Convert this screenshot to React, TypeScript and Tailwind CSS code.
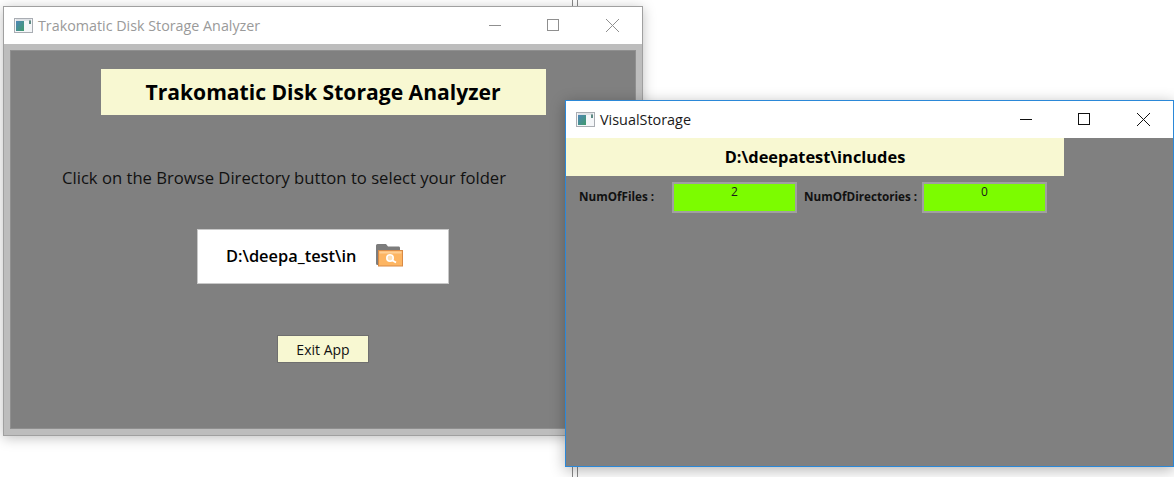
const uiFont = "font-['Open_Sans','Noto_Sans',sans-serif]";

const AppIcon = () => (
  <svg width="19" height="15" viewBox="0 0 19 15" className="shrink-0">
    <defs>
      <linearGradient id="appGrad" x1="0" y1="0" x2="1" y2="1">
        <stop offset="0" stopColor="#4f86b8" />
        <stop offset="1" stopColor="#3f9a6c" />
      </linearGradient>
    </defs>
    <rect x="0.5" y="0.5" width="18" height="14" fill="#f4f6f8" stroke="#a9adb3" />
    <rect x="2" y="3" width="8" height="10" fill="url(#appGrad)" />
    <rect x="15" y="2" width="2" height="4" fill="#5d8a84" />
    <rect x="2" y="1.5" width="15" height="1" fill="#c9ced4" />
  </svg>
);

const FolderIcon = () => (
  <svg width="29" height="25" viewBox="0 0 29 25">
    <path d="M1 2.5 Q1 1 2.5 1 H11 L13 3.5 H24 Q25 3.5 25 5 V8 H4 V22 H2.5 Q1 22 1 20.5 Z" fill="#7c7c7c" />
    <rect x="3.5" y="7.5" width="24" height="15.5" fill="#fdb562" stroke="#d98a45" />
    <rect x="4.5" y="8.5" width="22" height="2" fill="#ffcf94" />
    <circle cx="15" cy="15" r="3.2" fill="#fde0b8" stroke="#fff" strokeWidth="1.6" />
    <path d="M17.5 17.5 L21 19.5" stroke="#fff" strokeWidth="2" />
  </svg>
);

const WindowControls = ({ color }: { color: string }) => (
  <svg width="134" height="16" viewBox="0 0 134 16" className="shrink-0" fill="none" stroke={color} strokeWidth="1">
    <path d="M0 7.5 H12" />
    <rect x="58.5" y="1.5" width="11" height="11" />
    <path d="M117 1 L130 14 M130 1 L117 14" />
  </svg>
);

const CountField = ({ value }: { value: string }) => (
  <div className="h-[31px] w-[125px] border-2 border-[#a0a0a0] bg-[#7cfc00] text-center text-[12px] leading-[15px] text-[#1a1a1a]">
    {value}
  </div>
);

export default function App() {
  return (
    <div className={`relative h-[477px] w-[1174px] overflow-hidden bg-white ${uiFont}`}>
      {/* stuff behind the windows */}
      <div className="absolute left-[572px] top-0 h-[477px] w-[6px] border-x border-[#8a8a8a]" />

      {/* main window */}
      <div className="absolute left-[3px] top-[6px] flex h-[430px] w-[640px] flex-col border border-[#a0a0a0] bg-[#bdbdbd] shadow-[0_2px_12px_rgba(0,0,0,0.25)]">
        <div className="flex h-[37px] shrink-0 items-center justify-between bg-white pl-[10px] pr-[19px]">
          <div className="flex items-center gap-[5px]">
            <AppIcon />
            <span className="text-[14.3px] text-[#9a9a9a]">Trakomatic Disk Storage Analyzer</span>
          </div>
          <WindowControls color="#8f8f8f" />
        </div>
        <div className="mx-[6px] mb-[6px] mt-[6px] flex flex-1 flex-col items-center border border-[#8f8f8f] bg-[#808080] pt-[18px]">
          <div className="flex h-[46px] w-[445px] shrink-0 items-center justify-center bg-[#f8f8d2] text-[21.1px] font-bold text-black">
            Trakomatic Disk Storage Analyzer
          </div>
          <p className="mt-[50px] w-full pl-[51px] text-[16.65px] leading-[25px] text-[#111]">
            Click on the Browse Directory button to select your folder
          </p>
          <div className="mt-[39px] flex h-[55px] w-[252px] shrink-0 items-center border border-[#c8c8c8] bg-white pl-[28px]">
            <span className="w-[131px] overflow-hidden whitespace-nowrap text-[16.4px] font-semibold text-black">
              D:\deepa_test\includes
            </span>
            <span className="mb-[2px] ml-[18px] flex"><FolderIcon /></span>
          </div>
          <button className="mt-[51px] h-[28px] w-[92px] shrink-0 border border-[#6f6f6f] bg-[#f8f8d2] text-[14px] text-[#111]">
            Exit App
          </button>
        </div>
      </div>

      {/* results window */}
      <div className="absolute left-[565px] top-[100px] flex h-[367px] w-[609px] flex-col border border-[#2b88d8] bg-[#808080] shadow-[0_3px_14px_rgba(0,0,0,0.3)]">
        <div className="flex h-[37px] shrink-0 items-center justify-between bg-white pl-[10px] pr-[19px]">
          <div className="flex items-center gap-[5px]">
            <AppIcon />
            <span className="text-[14.4px] text-[#1a1a1a]">VisualStorage</span>
          </div>
          <WindowControls color="#111111" />
        </div>
        <div className="flex h-[38px] w-[498px] shrink-0 items-center justify-center bg-[#f8f8d2] text-[16.4px] font-bold text-black">
          D:\deepatest\includes
        </div>
        <div className="mt-[6px] flex items-start pl-[13px]">
          <span className="mt-[6px] w-[93px] text-[11.7px] font-bold text-[#111]">NumOfFiles :</span>
          <CountField value="2" />
          <span className="ml-[7px] mt-[6px] w-[118px] whitespace-nowrap text-[11.7px] font-bold text-[#111]">NumOfDirectories :</span>
          <CountField value="0" />
        </div>
      </div>
    </div>
  );
}
